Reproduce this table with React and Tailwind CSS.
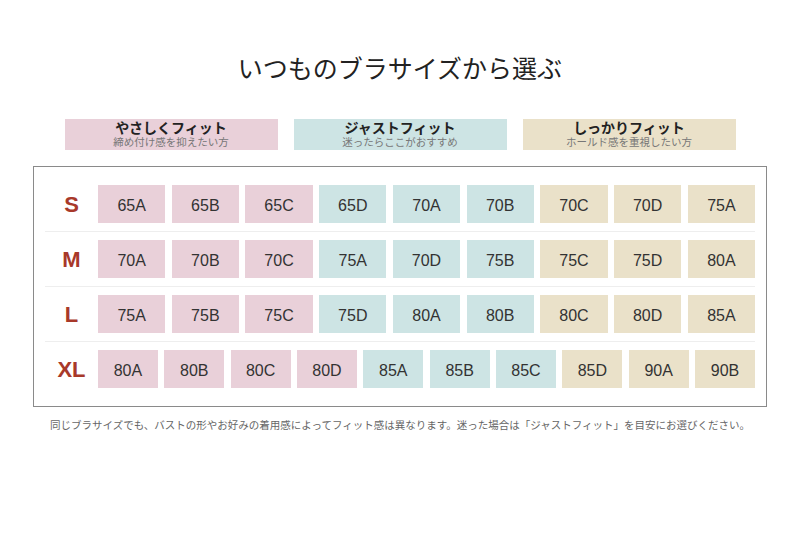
// Bra size chart — pick your usual size by fit.

const JP = { fontFamily: '"Noto Sans CJK JP", "Noto Sans", sans-serif' };
const LAT = { fontFamily: '"Liberation Sans", Arial, sans-serif' };

const FIT = {
  soft: "bg-[#e9d0d9]",
  just: "bg-[#cde4e4]",
  firm: "bg-[#eae1c9]",
};

const LEGEND = [
  { key: "soft", title: "やさしくフィット", sub: "締め付け感を抑えたい方" },
  { key: "just", title: "ジャストフィット", sub: "迷ったらここがおすすめ" },
  { key: "firm", title: "しっかりフィット", sub: "ホールド感を重視したい方" },
];

const ROWS = [
  { size: "S", cells: [["65A", "soft"], ["65B", "soft"], ["65C", "soft"], ["65D", "just"], ["70A", "just"], ["70B", "just"], ["70C", "firm"], ["70D", "firm"], ["75A", "firm"]] },
  { size: "M", cells: [["70A", "soft"], ["70B", "soft"], ["70C", "soft"], ["75A", "just"], ["70D", "just"], ["75B", "just"], ["75C", "firm"], ["75D", "firm"], ["80A", "firm"]] },
  { size: "L", cells: [["75A", "soft"], ["75B", "soft"], ["75C", "soft"], ["75D", "just"], ["80A", "just"], ["80B", "just"], ["80C", "firm"], ["80D", "firm"], ["85A", "firm"]] },
  { size: "XL", cells: [["80A", "soft"], ["80B", "soft"], ["80C", "soft"], ["80D", "soft"], ["85A", "just"], ["85B", "just"], ["85C", "just"], ["85D", "firm"], ["90A", "firm"], ["90B", "firm"]] },
];

export default function App() {
  return (
    <div className="min-h-[533px] w-[800px] bg-white pt-[48px]" style={JP}>
      <h1 className="text-center text-[25px] leading-[38px] font-normal text-[#222]">
        いつものブラサイズから選ぶ
      </h1>

      <div className="mt-[33px] flex justify-center gap-[16px]">
        {LEGEND.map((l) => (
          <div key={l.key} className={`flex h-[31px] w-[213px] flex-col items-center justify-center ${FIT[l.key]}`}>
            <div className="text-[14px] leading-[15px] font-bold text-[#222]">{l.title}</div>
            <div className="text-[10.5px] leading-[14px] text-[#777]">{l.sub}</div>
          </div>
        ))}
      </div>

      <div className="mx-auto mt-[16px] w-[734px] border border-[#8a8a8a] px-[11px] py-[10px]">
        {ROWS.map((r, i) => (
          <div
            key={r.size}
            className={`flex items-center py-[8px] ${i < ROWS.length - 1 ? "border-b border-[#eeeeee]" : ""}`}
          >
            <div className="w-[53px] text-center text-[22px] font-bold text-[#a8392a]" style={LAT}>
              {r.size}
            </div>
            <div className="flex flex-1 gap-[6.5px]">
              {r.cells.map(([label, fit], j) => (
                <div
                  key={j}
                  className={`flex h-[38px] flex-1 items-center justify-center pt-[3px] text-[16px] text-[#333] ${FIT[fit]}`}
                  style={LAT}
                >
                  {label}
                </div>
              ))}
            </div>
          </div>
        ))}
      </div>

      <p className="mt-[10px] text-center text-[10.5px] text-[#666]">
        同じブラサイズでも、バストの形やお好みの着用感によってフィット感は異なります。迷った場合は「ジャストフィット」を目安にお選びください。
      </p>
    </div>
  );
}
